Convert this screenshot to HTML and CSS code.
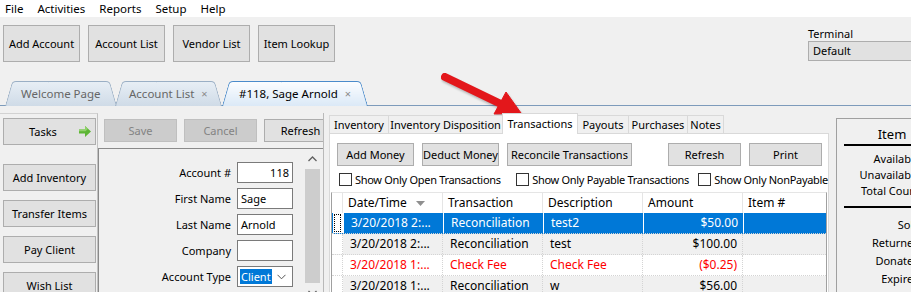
FILE: index.html
```html
<!DOCTYPE html>
<html>
<head>
<meta charset="utf-8">
<link rel="stylesheet" href="styles.css">
</head>
<body>
<div class="menubar">
  <span>File</span><span>Activities</span><span>Reports</span><span>Setup</span><span>Help</span>
</div>
<div class="topbar">
  <div class="toolrow">
    <div class="tools">
      <div class="btn big">Add Account</div>
      <div class="btn big">Account List</div>
      <div class="btn big">Vendor List</div>
      <div class="btn big">Item Lookup</div>
    </div>
    <div class="terminal">
      <div class="term-label">Terminal</div>
      <div class="combo">Default</div>
    </div>
  </div>
  <div class="doctabs">
    <div class="dtab t1"><span>Welcome Page</span></div>
    <div class="dtab t2"><span>Account List</span><span class="x">×</span></div>
    <div class="dtab t3 active"><span>#118, Sage Arnold</span><span class="x">×</span></div>
  </div>
</div>
<div class="main">
  <div class="side">
    <div class="btn task tasks"><span>Tasks</span>
      <svg width="12" height="11" viewBox="0 0 12 11"><path d="M0 3.5H6V0L12 5.5 6 11V7.5H0Z" fill="#5db535"/><path d="M0 3.5H6V0L9 2.8 6.5 5.2H0Z" fill="#8fd16a"/></svg>
    </div>
    <div class="btn task">Add Inventory</div>
    <div class="btn task">Transfer Items</div>
    <div class="btn task">Pay Client</div>
    <div class="btn task">Wish List</div>
  </div>
  <div class="acct">
    <div class="acct-btns">
      <div class="btn mid disabled">Save</div>
      <div class="btn mid disabled">Cancel</div>
      <div class="btn mid">Refresh</div>
    </div>
    <div class="formbox">
      <div class="form">
        <label>Account #</label><div class="input num">118</div>
        <label>First Name</label><div class="input">Sage</div>
        <label>Last Name</label><div class="input">Arnold</div>
        <label>Company</label><div class="input"></div>
        <label>Account Type</label><div class="input select"><span class="sel">Client</span>
          <svg width="9" height="6" viewBox="0 0 9 6"><path d="M0.5 0.8L4.5 4.8 8.5 0.8" fill="none" stroke="#555" stroke-width="1"/></svg></div>
      </div>
      <div class="vscroll">
        <div class="sarrow"><svg width="9" height="6" viewBox="0 0 9 6"><path d="M0.5 5L4.5 1 8.5 5" fill="none" stroke="#606060" stroke-width="1.3"/></svg></div>
        <div class="thumb"></div>
        <div class="sarrow"><svg width="9" height="6" viewBox="0 0 9 6"><path d="M0.5 1L4.5 5 8.5 1" fill="none" stroke="#606060" stroke-width="1.3"/></svg></div>
      </div>
    </div>
  </div>
  <div class="txpane">
    <div class="ttabs">
      <div class="ttab w59">Inventory</div>
      <div class="ttab w114">Inventory Disposition</div>
      <div class="ttab w75 active">Transactions</div>
      <div class="ttab w51">Payouts</div>
      <div class="ttab w59">Purchases</div>
      <div class="ttab w36">Notes</div>
    </div>
    <div class="tbody">
      <div class="txbtns">
        <div class="btn tb w77">Add Money</div>
        <div class="btn tb w77">Deduct Money</div>
        <div class="btn tb w125">Reconcile Transactions</div>
        <div class="btn tb w73 push">Refresh</div>
        <div class="btn tb w73">Print</div>
      </div>
      <div class="checks">
        <div class="chk c1"><span class="box"></span>Show Only Open Transactions</div>
        <div class="chk c2"><span class="box"></span>Show Only Payable Transactions</div>
        <div class="chk"><span class="box"></span>Show Only NonPayable</div>
      </div>
      <div class="grid">
        <div class="row head">
          <div class="c rh"></div>
          <div class="c">Date/Time <svg class="sort" width="9" height="5" viewBox="0 0 9 5"><path d="M0 0H9L4.5 5Z" fill="#8f8f8f"/></svg></div>
          <div class="c">Transaction</div>
          <div class="c">Description</div>
          <div class="c">Amount</div>
          <div class="c">Item #</div>
        </div>
        <div class="row sel">
          <div class="c rh"><span class="focus"></span></div>
          <div class="c">3/20/2018 2:...</div>
          <div class="c">Reconciliation</div>
          <div class="c">test2</div>
          <div class="c amt">$50.00</div>
          <div class="c"></div>
        </div>
        <div class="row alt">
          <div class="c rh"></div>
          <div class="c">3/20/2018 2:...</div>
          <div class="c">Reconciliation</div>
          <div class="c">test</div>
          <div class="c amt">$100.00</div>
          <div class="c"></div>
        </div>
        <div class="row fee">
          <div class="c rh"></div>
          <div class="c">3/20/2018 1:...</div>
          <div class="c">Check Fee</div>
          <div class="c">Check Fee</div>
          <div class="c amt">($0.25)</div>
          <div class="c"></div>
        </div>
        <div class="row alt">
          <div class="c rh"></div>
          <div class="c">3/20/2018 1:...</div>
          <div class="c">Reconciliation</div>
          <div class="c">w</div>
          <div class="c amt">$56.00</div>
          <div class="c"></div>
        </div>
      </div>
    </div>
  </div>
  <div class="itempanel">
    <div class="ihead">Item</div>
    <div class="ilist first">
      <div>Available</div>
      <div>Unavailable</div>
      <div>Total Count</div>
    </div>
    <div class="ilist second">
      <div>Sold</div>
      <div>Returned</div>
      <div>Donated</div>
      <div>Expired</div>
    </div>
  </div>
</div>
<svg class="arrow" width="911" height="292" viewBox="0 0 911 292">
  <g fill="#e3171b" stroke="#e3171b">
    <line x1="445" y1="77" x2="503" y2="105" stroke-width="8" stroke-linecap="round"/>
    <polygon points="521,113 494,114 506,92" stroke-width="1" stroke-linejoin="round"/>
  </g>
</svg>
</body>
</html>
```
FILE: styles.css
```css
* { box-sizing: border-box; }
html, body { margin: 0; padding: 0; }
body {
  width: 911px;
  height: 292px;
  overflow: hidden;
  position: relative;
  background: #f0f0f0;
  font-family: "Noto Sans", "Liberation Sans", sans-serif;
  font-size: 11px;
  color: #000;
}

.menubar {
  height: 17px;
  background: #fff;
  display: flex;
  align-items: center;
  gap: 14px;
  padding-left: 5px;
  line-height: 17px;
  font-size: 11.5px;
}

.btn {
  background: #e1e1e1;
  border: 1px solid #adadad;
  display: flex;
  align-items: center;
  justify-content: center;
  white-space: nowrap;
  flex-shrink: 0;
}
.btn.disabled {
  background: #cccccc;
  border-color: #bfbfbf;
  color: #838383;
}

.topbar {
  height: 89px;
  border-bottom: 1px solid #7d9bbb;
  display: flex;
  flex-direction: column;
}
.toolrow {
  display: flex;
  padding: 8px 0 0 3px;
}
.tools { display: flex; gap: 8px; }
.btn.big { width: 77px; height: 37px; }
.terminal {
  margin-left: 473px;
  width: 150px;
  flex-shrink: 0;
}
.term-label { height: 16px; line-height: 16px; padding-top: 1px; }
.combo {
  height: 20px;
  background: #e1e1e1;
  border: 1px solid #adadad;
  padding-left: 4px;
  line-height: 18px;
}

.doctabs {
  margin-top: auto;
  height: 24px;
  display: flex;
  align-items: flex-end;
}
.dtab {
  position: relative;
  isolation: isolate;
  height: 24px;
  display: flex;
  align-items: center;
  gap: 7px;
  color: #666;
  font-size: 11.5px;
  padding-top: 1px;
}
.dtab::before, .dtab::after {
  content: "";
  position: absolute;
  top: 0;
  bottom: -1px;
  z-index: -1;
  background: linear-gradient(#e7eef5, #cfdbe7);
  border: 1px solid #9aafc5;
  border-bottom: none;
}
.dtab::before {
  left: 0;
  right: 45%;
  border-right: none;
  border-radius: 4px 0 0 0;
  transform: skewX(-16deg);
  transform-origin: bottom left;
}
.dtab::after {
  left: 45%;
  right: 0;
  border-left: none;
  border-radius: 0 4px 0 0;
  transform: skewX(16deg);
  transform-origin: bottom right;
}
.dtab.active { color: #000; }
.dtab.active::before, .dtab.active::after {
  background: linear-gradient(#fbfdff, #dbe9f7);
  border-color: #4a8bcb;
}
.dtab .x { color: #8a8a8a; font-size: 11px; }
.t1 { margin-left: 5px; width: 112px; padding-left: 16px; }
.t2 { margin-left: -2px; width: 107px; padding-left: 14px; }
.t3 { margin-left: 0; width: 146px; padding-left: 17px; }

.main {
  display: flex;
  height: 186px;
}

.side {
  width: 98px;
  margin-top: 7px;
  border-top: 1px solid #d2d2d2;
  border-right: 1px solid #c2c2c2;
  padding: 4px 0 0 3px;
  display: flex;
  flex-direction: column;
  gap: 9px;
  flex-shrink: 0;
}
.btn.task { width: 93px; height: 27px; flex-shrink: 0; }
.btn.tasks {
  justify-content: space-between;
  padding: 0 4px 0 25px;
  margin-bottom: 10px;
}

.acct {
  width: 226px;
  flex-shrink: 0;
  margin-top: 7px;
  border-right: 1px solid #b9b9b9;
  overflow: hidden;
  display: flex;
  flex-direction: column;
}
.acct-btns {
  display: flex;
  gap: 7px;
  padding: 6px 0 0 6px;
}
.btn.mid { width: 73px; height: 23px; }
.formbox {
  margin-top: 6px;
  flex: 1;
  border-top: 1px solid #8a8a8a;
  border-left: 1px solid #8a8a8a;
  display: flex;
}
.form {
  width: 205px;
  display: grid;
  grid-template-columns: 132px 56px;
  grid-auto-rows: 21px;
  column-gap: 6px;
  row-gap: 5px;
  padding-top: 13px;
  align-content: start;
}
.form label {
  text-align: right;
  line-height: 21px;
  white-space: nowrap;
}
.input {
  background: #fff;
  border: 1px solid #7a7a7a;
  line-height: 19px;
  padding: 0 3px;
}
.input.num { text-align: right; }
.input.select {
  display: flex;
  align-items: center;
  justify-content: space-between;
  padding: 0 6px 0 2px;
}
.sel {
  background: #0078d7;
  color: #fff;
  line-height: 15px;
  padding: 0 1px;
}
.vscroll {
  width: 17px;
  display: flex;
  flex-direction: column;
}
.sarrow {
  height: 20px;
  display: flex;
  align-items: center;
  justify-content: center;
}
.thumb {
  height: 114px;
  background: #cdcdcd;
  margin: 0 1px;
}

.txpane {
  width: 500px;
  flex-shrink: 0;
  margin: 7px 0 0 5px;
  display: flex;
  flex-direction: column;
}
.ttabs {
  height: 20px;
  display: flex;
  align-items: flex-end;
  position: relative;
  z-index: 1;
}
.ttab {
  height: 18px;
  border: 1px solid #d9d9d9;
  border-bottom: none;
  margin-right: -1px;
  background: #f0f0f0;
  text-align: center;
  line-height: 17px;
  white-space: nowrap;
}
.ttab.active {
  height: 21px;
  margin-bottom: -1px;
  background: #fff;
  line-height: 19px;
}
.w59 { width: 60px; }
.w114 { width: 115px; }
.w75 { width: 76px; }
.w51 { width: 52px; }
.w36 { width: 37px; }
.tbody {
  flex: 1;
  background: #fff;
  border: 1px solid #d9d9d9;
  padding: 9px 0 0 1px;
}
.txbtns {
  display: flex;
  gap: 8px;
  padding-left: 6px;
}
.btn.tb { height: 23px; }
.btn.w77 { width: 77px; }
.btn.w125 { width: 125px; }
.btn.w73 { width: 73px; }
.txbtns .push { margin-left: 28px; }

.checks {
  display: flex;
  margin-top: 6px;
  padding-left: 8px;
  height: 14px;
  align-items: center;
  white-space: nowrap;
  letter-spacing: -0.3px;
}
.chk { display: flex; align-items: center; gap: 3px; }
.chk.c1 { width: 178px; }
.chk.c2 { width: 183px; }
.box {
  width: 13px;
  height: 13px;
  border: 1px solid #333;
  background: #fff;
  flex-shrink: 0;
}

.grid {
  margin-top: 6px;
  width: 496px;
  border-left: 1px solid #a0a0a0;
  border-right: 1px solid #a0a0a0;
  border-top: 1px solid #e5e5e5;
  font-size: 12px;
}
.row {
  display: grid;
  grid-template-columns: 11px 100px 100px 100px 100px 1fr;
  height: 21px;
  border-bottom: 1px dotted #d4d4d4;
}
.row .c {
  border-right: 1px dotted #d4d4d4;
  padding-left: 7px;
  line-height: 20px;
  white-space: nowrap;
  overflow: hidden;
}
.row .c:last-child { border-right: none; }
.row .c.rh { padding: 0; background: #fff; position: relative; }
.row .c.amt { text-align: right; padding: 0 5px 0 0; }
.row.head { height: 20px; border-bottom: none; }
.row.head .c {
  border-right: 1px solid #e5e5e5;
  padding-left: 5px;
  display: flex;
  align-items: center;
}
.row.head .c:last-child { border-right: none; }
.sort { margin-left: auto; margin-right: 17px; }
.row.sel { background: #0078d7; color: #fff; }
.row.sel .c { border-right: 1px solid #fff; }
.row.sel .c:last-child { border-right: none; }
.row.alt { background: #f0f0f0; }
.row.fee { background: #fff; color: #f00; }
.focus {
  position: absolute;
  left: 1px;
  top: 1px;
  bottom: 1px;
  width: 7px;
  border: 1px dotted #000;
}

.itempanel {
  width: 110px;
  flex-shrink: 0;
  margin: 12px 0 0 7px;
  border-top: 1px solid #a0a0a0;
  border-left: 1px solid #a0a0a0;
  padding: 0 0 0 7px;
}
.ihead {
  font-size: 13px;
  text-align: center;
  padding-top: 5px;
  line-height: 20px;
  border-bottom: 2px solid #000;
  width: 96px;
}
.ilist {
  text-align: right;
  white-space: nowrap;
  width: 96px;
  padding-right: 20px;
}
.ilist.first {
  margin-top: 5px;
  line-height: 16px;
  padding-bottom: 7px;
  border-bottom: 2px solid #000;
}
.ilist.second {
  margin-top: 8px;
  line-height: 18px;
}

.arrow {
  position: absolute;
  left: 0;
  top: 0;
  pointer-events: none;
  filter: drop-shadow(1px 2px 1px rgba(0, 0, 0, 0.25));
}
```
